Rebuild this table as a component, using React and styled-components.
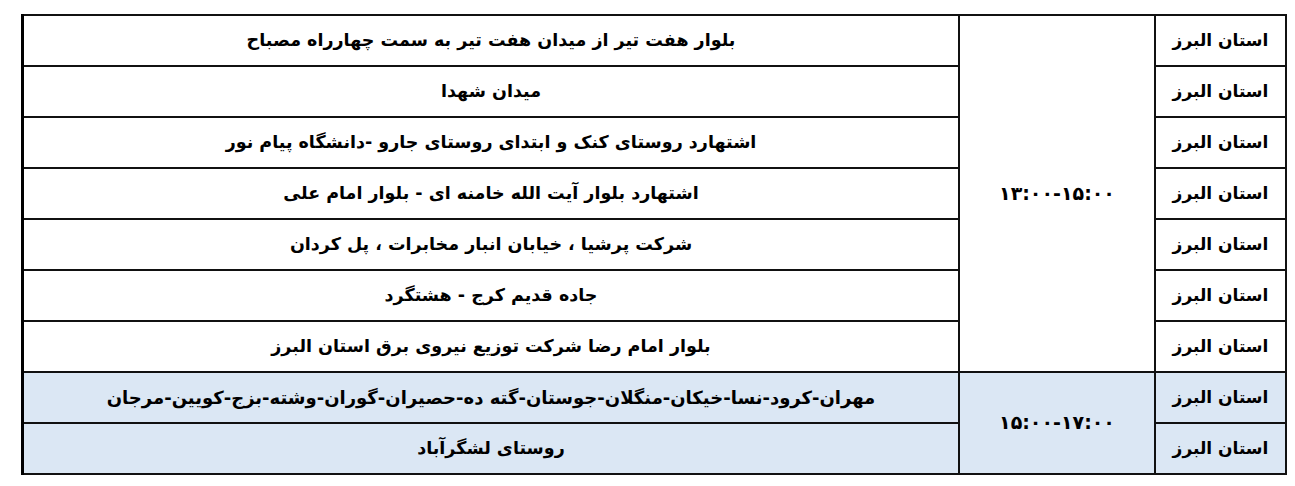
import React from "react";
import styled, { createGlobalStyle } from "styled-components";

const GlobalStyle = createGlobalStyle`
  html, body {
    margin: 0;
    padding: 0;
    background: #fff;
  }
  body {
    font-family: "DejaVu Sans", "Noto Sans", sans-serif;
    color: #000;
  }
`;

const Page = styled.div`
  padding: 14px 8px 0 21px;
`;

const Table = styled.table`
  direction: rtl;
  width: 1266px;
  border-collapse: collapse;
  border-left: 3px solid #000;
  border-top: 2px solid #000;
  border-right: 2px solid #000;
  border-bottom: 2px solid #000;
  table-layout: fixed;
`;

const Row = styled.tr`
  height: 51px;
  background: ${(p) => (p.$tinted ? "#dbe7f4" : "#fff")};
`;

const Cell = styled.td`
  border: 2px solid #111;
  padding: 0;
  font-weight: bold;
  font-size: ${(p) => p.$size || "17.5px"};
  line-height: 1;
  text-align: center;
  vertical-align: middle;
  white-space: nowrap;
`;

const Time = styled.span`
  direction: ltr;
  unicode-bidi: isolate;
  font-size: 19px;
  letter-spacing: 1px;
`;

const PROVINCE = "استان البرز";

const groups = [
  {
    time: "۱۳:۰۰-۱۵:۰۰",
    tinted: false,
    places: [
      "بلوار هفت تیر از میدان هفت تیر به سمت چهارراه مصباح",
      "میدان شهدا",
      "اشتهارد روستای کنک و ابتدای روستای جارو -دانشگاه پیام نور",
      "اشتهارد بلوار آیت الله خامنه ای - بلوار امام علی",
      "شرکت پرشیا ، خیابان انبار مخابرات ، پل کردان",
      "جاده قدیم کرج  - هشتگرد",
      "بلوار امام رضا  شرکت توزیع نیروی برق استان البرز",
    ],
  },
  {
    time: "۱۵:۰۰-۱۷:۰۰",
    tinted: true,
    places: [
      "مهران-کرود-نسا-خیکان-منگلان-جوستان-گته ده-حصیران-گوران-وشته-بزج-کویین-مرجان",
      "روستای لشگرآباد",
    ],
  },
];

export default function App() {
  return (
    <>
      <GlobalStyle />
      <Page>
        <Table>
          <colgroup>
            <col style={{ width: "131px" }} />
            <col style={{ width: "196px" }} />
            <col />
          </colgroup>
          <tbody>
            {groups.map((g) =>
              g.places.map((place, i) => (
                <Row key={g.time + i} $tinted={g.tinted}>
                  <Cell $size="17px">{PROVINCE}</Cell>
                  {i === 0 && (
                    <Cell rowSpan={g.places.length}>
                      <Time>{g.time}</Time>
                    </Cell>
                  )}
                  <Cell $size={place.length > 60 ? "18px" : undefined}>
                    {place}
                  </Cell>
                </Row>
              ))
            )}
          </tbody>
        </Table>
      </Page>
    </>
  );
}
